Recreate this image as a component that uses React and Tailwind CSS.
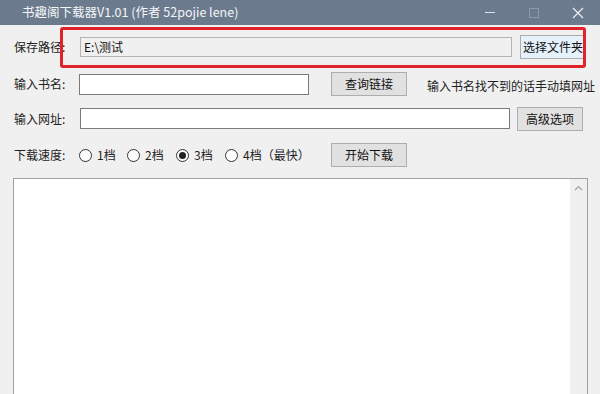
import React from 'react';

const font = { fontFamily: '"Noto Sans CJK SC", "Noto Sans", sans-serif' };

function Radio({ checked, label, className = '' }) {
  return (
    <label className={`flex items-center gap-[5px] text-[12px] text-[#222] whitespace-nowrap shrink-0 ${className}`}>
      <span className="w-[13px] h-[13px] rounded-full border border-[#333] bg-white flex items-center justify-center shrink-0">
        {checked && <span className="w-[7px] h-[7px] rounded-full bg-[#222]" />}
      </span>
      {label}
    </label>
  );
}

function Btn({ children, className = '' }) {
  return (
    <div className={`h-[24px] shrink-0 border border-[#adadad] bg-[#e1e1e1] flex items-center justify-center text-[12px] text-[#111] whitespace-nowrap ${className}`}>
      {children}
    </div>
  );
}

export default function App() {
  return (
    <div className="w-[600px] h-[394px] bg-[#f0f0f0] overflow-hidden flex flex-col" style={font}>
      {/* 标题栏 */}
      <div className="h-[25px] bg-[#6b7b8d] flex items-center pl-[22px] text-[12.5px] text-[#f4f6f8] shrink-0">
        <span className="flex-1">书趣阁下载器V1.01 (作者 52pojie lene)</span>
        <div className="flex items-center h-full text-[#e8ecf0]">
          <div className="w-[44px] flex justify-center"><span className="w-[10px] h-[1px] bg-[#dfe4ea]" /></div>
          <div className="w-[44px] flex justify-center"><span className="w-[10px] h-[10px] border border-[#8e9aa8]" /></div>
          <div className="w-[44px] flex justify-center">
            <svg width="12" height="12" viewBox="0 0 12 12"><path d="M1 1L11 11M11 1L1 11" stroke="#f0f3f6" strokeWidth="1.1" /></svg>
          </div>
        </div>
      </div>

      <div className="flex flex-col px-[14px] pt-[1px]">
        {/* 保存路径 */}
        <div className="flex items-center h-[41px] relative">
          <span className="w-[66px] shrink-0 text-[12px] text-[#222]">保存路径:</span>
          <div className="flex-1 h-[20px] border border-[#b4b4b4] bg-[#f0f0f0] flex items-center px-[3px] text-[12px] text-[#111]">E:\测试</div>
          <Btn className="w-[66px] ml-[8px] border-[#0078d7] bg-[#e5f1fb] text-[11.5px]">选择文件夹</Btn>
          <div className="absolute left-[46px] right-[0px] top-[1px] bottom-[-1px] border-[3px] border-[#e02328] rounded-[3px]" />
        </div>

        {/* 输入书名 */}
        <div className="flex items-center h-[34px]">
          <span className="w-[65px] shrink-0 text-[12px] text-[#222]">输入书名:</span>
          <div className="w-[230px] shrink-0 h-[21px] border border-[#7a7a7a] bg-white" />
          <Btn className="w-[76px] ml-[22px]">查询链接</Btn>
          <span className="ml-[20px] text-[12px] text-[#222] pt-[4px] whitespace-nowrap">输入书名找不到的话手动填网址</span>
        </div>

        {/* 输入网址 */}
        <div className="flex items-center h-[35px]">
          <span className="w-[66px] shrink-0 text-[12px] text-[#222]">输入网址:</span>
          <div className="w-[430px] shrink-0 h-[21px] border border-[#7a7a7a] bg-white" />
          <Btn className="w-[66px] ml-[7px]">高级选项</Btn>
        </div>

        {/* 下载速度 */}
        <div className="flex items-center h-[38px]">
          <span className="w-[65px] shrink-0 text-[12px] text-[#222]">下载速度:</span>
          <div className="w-[252px] shrink-0 flex items-center">
            <Radio label="1档" className="w-[48px]" />
            <Radio label="2档" className="w-[49px]" />
            <Radio label="3档" className="w-[49px]" checked />
            <Radio label="4档（最快）" />
          </div>
          <Btn className="w-[76px]">开始下载</Btn>
        </div>

        {/* 日志 */}
        <div className="mt-[4px] ml-[-1px] mr-[-2px] h-[240px] border border-[#a0a0a0] bg-white flex justify-end">
          <div className="w-[17px] bg-[#f0f0f0] flex flex-col items-center pt-[6px]">
            <svg width="9" height="6" viewBox="0 0 9 6"><path d="M1 5L4.5 1.5L8 5" stroke="#a3a3a3" strokeWidth="1.2" fill="none" /></svg>
          </div>
        </div>
      </div>
    </div>
  );
}
